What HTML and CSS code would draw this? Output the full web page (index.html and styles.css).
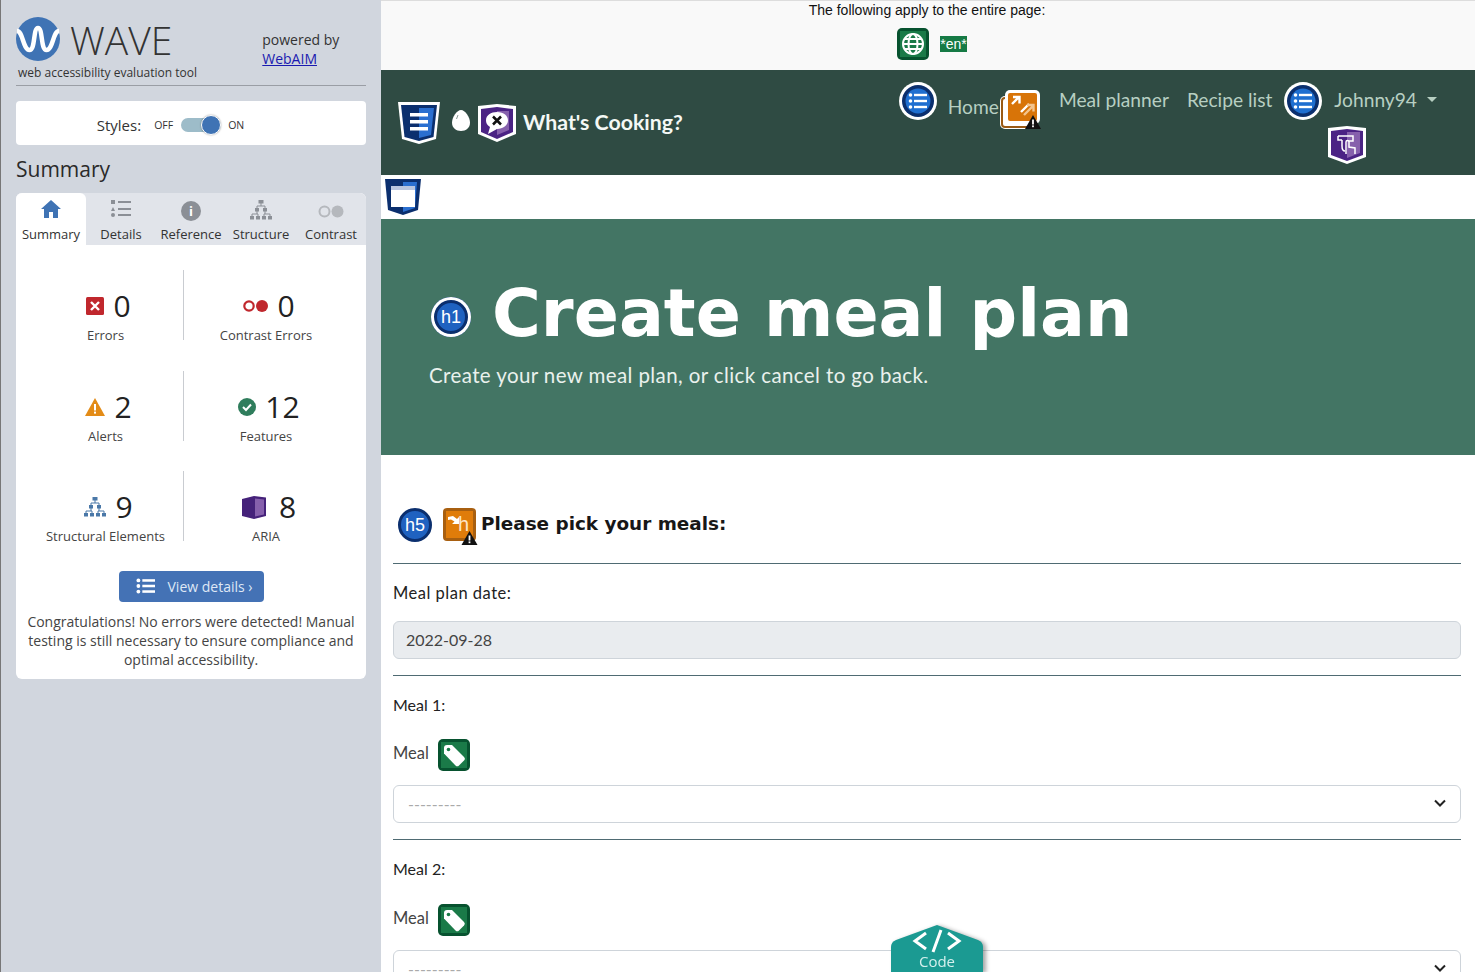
FILE: index.html
```html
<!DOCTYPE html>
<html lang="en">
<head>
  <meta charset="UTF-8" />
  <title>Create meal plan</title>
  <link rel="stylesheet" href="styles.css">
</head>
<body>
  <svg class="sprite" width="0" height="0">
    <defs>
      <symbol id="list-lines" viewBox="0 0 24 20">
        <circle cx="3" cy="3" r="2.4"/><circle cx="3" cy="10" r="2.4"/><circle cx="3" cy="17" r="2.4"/>
        <rect x="8" y="1.4" width="16" height="3.2"/><rect x="8" y="8.4" width="16" height="3.2"/><rect x="8" y="15.4" width="16" height="3.2"/>
      </symbol>
      <symbol id="round-list" viewBox="0 0 38 38">
        <circle cx="19" cy="19" r="19" fill="#fff"/>
        <circle cx="19" cy="19" r="16" fill="#0b2f6e"/>
        <circle cx="19" cy="19" r="12.5" fill="#1f6fd0"/>
        <g fill="#fff">
          <circle cx="11.5" cy="13" r="1.8"/><circle cx="11.5" cy="19" r="1.8"/><circle cx="11.5" cy="25" r="1.8"/>
          <rect x="15" y="11.8" width="13" height="2.4"/><rect x="15" y="17.8" width="13" height="2.4"/><rect x="15" y="23.8" width="13" height="2.4"/>
        </g>
      </symbol>
      <symbol id="tag" viewBox="0 0 32 32">
        <rect width="32" height="32" rx="5" fill="#07522f"/>
        <rect x="3" y="3" width="26" height="26" fill="#1a7a48"/>
        <path d="M6 9 a3 3 0 0 1 3-3 h5 l12 12 a2.5 2.5 0 0 1 0 3.5 l-5 5 a2.5 2.5 0 0 1-3.5 0 L6 14.5 Z" fill="#fff"/>
        <circle cx="10.5" cy="10.5" r="1.8" fill="#1a7a48"/>
      </symbol>
      <symbol id="warn" viewBox="0 0 16 14">
        <path d="M8 0 L16 14 H0 Z" fill="#111"/>
        <rect x="7.1" y="4.5" width="1.8" height="5" fill="#fff"/>
        <rect x="7.1" y="10.4" width="1.8" height="1.8" fill="#fff"/>
      </symbol>
    </defs>
  </svg>

  <aside class="sidebar">
    <header class="brand-row">
      <svg class="wave-logo" viewBox="0 0 44 44">
        <circle cx="22" cy="22" r="22" fill="#3f73b4"/>
        <path d="M1 14 C7 14 7 33 13.500 33 C19.500 33 17 11 22 11 C27 11 24.500 33 30.500 33 C37 33 37 14 43 14" fill="none" stroke="#fff" stroke-width="4.500"/>
      </svg>
      <span class="wave-name">WAVE</span>
      <span class="powered">powered by<br><a href="#">WebAIM</a></span>
    </header>
    <p class="tagline">web accessibility evaluation tool</p>

    <div class="styles-card">
      <span class="styles-label">Styles:</span>
      <span class="styles-state">OFF</span>
      <span class="switch"><span class="knob"></span></span>
      <span class="styles-state">ON</span>
    </div>

    <h2 class="side-title">Summary</h2>

    <div class="panel">
      <nav class="tabs">
        <a class="tab active">
          <svg viewBox="0 0 20 18" width="20" height="18"><path d="M10 0 L20 9 H17 V18 H12 V12 H8 V18 H3 V9 H0 Z" fill="#3f73b4"/></svg>
          Summary
        </a>
        <a class="tab">
          <svg viewBox="0 0 20 18" width="20" height="18" fill="#8b8f96"><rect x="0" y="0" width="4" height="4"/><path d="M2 7 L4 11 H0 Z"/><circle cx="2" cy="15" r="2"/><rect x="7" y="1" width="13" height="2"/><rect x="7" y="8" width="13" height="2"/><rect x="7" y="14" width="13" height="2"/></svg>
          Details
        </a>
        <a class="tab">
          <span class="info">i</span>
          Reference
        </a>
        <a class="tab">
          <svg viewBox="0 0 22 20" width="22" height="20"><g fill="#8b8f96"><rect x="8.5" y="0" width="5" height="3.5"/><rect x="5" y="8" width="4" height="3.5"/><rect x="13" y="8" width="4" height="3.5"/><rect x="0" y="16" width="4" height="3.5"/><rect x="6" y="16" width="4" height="3.5"/><rect x="12" y="16" width="4" height="3.5"/><rect x="18" y="16" width="4" height="3.5"/></g><path d="M11 3 V6 M7 8 V6 H15 V8 M2 16 V14 H8 V16 M7 11 V14 M14 16 V14 H20 V16 M15 11 V14" fill="none" stroke="#8b8f96"/></svg>
          Structure
        </a>
        <a class="tab">
          <svg class="contrast-icon" viewBox="0 0 26 13" width="26" height="13"><circle cx="6.5" cy="6.5" r="5" fill="none" stroke="#b5b8bd" stroke-width="2"/><circle cx="19.5" cy="6.5" r="6" fill="#b5b8bd"/></svg>
          Contrast
        </a>
      </nav>

      <div class="stats">
        <div class="stat">
          <div class="stat-top">
            <svg viewBox="0 0 18 18" width="18" height="18"><rect width="18" height="18" rx="1.5" fill="#c0272d"/><path d="M5 5 L13 13 M13 5 L5 13" stroke="#fff" stroke-width="2.4"/></svg>
            <span class="num">0</span>
          </div>
          <div class="stat-label">Errors</div>
        </div>
        <div class="stat">
          <div class="stat-top">
            <svg viewBox="0 0 25 12" width="25" height="12"><circle cx="6" cy="6" r="4.7" fill="none" stroke="#c0272d" stroke-width="2.2"/><circle cx="19" cy="6" r="6" fill="#c0272d"/></svg>
            <span class="num">0</span>
          </div>
          <div class="stat-label">Contrast Errors</div>
        </div>
        <div class="stat">
          <div class="stat-top">
            <svg viewBox="0 0 20 18" width="20" height="18"><path d="M10 0 L20 18 H0 Z" fill="#e38b17"/><rect x="9" y="6" width="2" height="6.5" fill="#fff"/><rect x="9" y="13.6" width="2" height="2" fill="#fff"/></svg>
            <span class="num">2</span>
          </div>
          <div class="stat-label">Alerts</div>
        </div>
        <div class="stat">
          <div class="stat-top">
            <svg viewBox="0 0 18 18" width="18" height="18"><circle cx="9" cy="9" r="9" fill="#2f7d5c"/><path d="M5 9 L8 12 L13 6.5" fill="none" stroke="#fff" stroke-width="2"/></svg>
            <span class="num">12</span>
          </div>
          <div class="stat-label">Features</div>
        </div>
        <div class="stat">
          <div class="stat-top">
            <svg viewBox="0 0 22 20" width="22" height="20"><g fill="#4a78a8"><rect x="8.5" y="0" width="5" height="3.5"/><rect x="5" y="8" width="4" height="3.5"/><rect x="13" y="8" width="4" height="3.5"/><rect x="0" y="16" width="4" height="3.5"/><rect x="6" y="16" width="4" height="3.5"/><rect x="12" y="16" width="4" height="3.5"/><rect x="18" y="16" width="4" height="3.5"/></g><path d="M11 3 V6 M7 8 V6 H15 V8 M2 16 V14 H8 V16 M7 11 V14 M14 16 V14 H20 V16 M15 11 V14" fill="none" stroke="#4a78a8"/></svg>
            <span class="num">9</span>
          </div>
          <div class="stat-label">Structural Elements</div>
        </div>
        <div class="stat">
          <div class="stat-top">
            <svg viewBox="0 0 24 23" width="24" height="23"><path d="M0 3 L12 0 V23 L0 20 Z" fill="#45227a"/><path d="M12 0 L24 1.5 V20 L12 23 Z" fill="#45227a"/><path d="M13 2.5 L22 3.5 V18.5 L13 20.5 Z" fill="#8660ac"/></svg>
            <span class="num num-aria">8</span>
          </div>
          <div class="stat-label">ARIA</div>
        </div>
      </div>

      <a class="details-btn">
        <svg width="19" height="16" class="btn-icon"><use href="#list-lines"/></svg>
        View details ›
      </a>
      <p class="congrats">Congratulations! No errors were detected! Manual testing is still necessary to ensure compliance and optimal accessibility.</p>
    </div>
  </aside>

  <div class="page">
    <div class="page-note">
      <div>The following apply to the entire page:</div>
      <div class="note-icons">
        <svg viewBox="0 0 32 32" width="32" height="32">
          <rect width="32" height="32" rx="5" fill="#07522f"/>
          <rect x="3" y="3" width="26" height="26" fill="#1a7a48"/>
          <g fill="none" stroke="#fff" stroke-width="2"><circle cx="16" cy="16" r="10"/><ellipse cx="16" cy="16" rx="4.5" ry="10"/><path d="M6 16 H26 M7.5 11 H24.5 M7.5 21 H24.5"/></g>
        </svg>
        <span class="lang-tag">*en*</span>
      </div>
    </div>

    <nav class="topnav">
      <a class="brand">
        <svg class="shield-lg" viewBox="0 0 42 42">
          <path d="M0 0 H42 L38 37 L21 42 L4 37 Z" fill="#fff"/>
          <path d="M3 3 H39 L35.500 35 L21 39 L6.500 35 Z" fill="#0b2f6e"/>
          <path d="M21 6 H36 L33 33 L21 36 Z" fill="#2a6fd0"/>
          <g fill="#fff"><rect x="12" y="11" width="18" height="3.500"/><rect x="12" y="18" width="18" height="3.500"/><rect x="12" y="25" width="18" height="3.500"/></g>
        </svg>
        <svg class="egg" viewBox="0 0 18 21"><path d="M9 0 C13 0 18 7 18 12.500 C18 18 14 21 9 21 C4 21 0 18 0 12.500 C0 7 5 0 9 0 Z" fill="#fff"/><path d="M6 5 L4.500 9" stroke="#8a9a95"/></svg>
        <svg class="shield-md" viewBox="0 0 38 38">
          <path d="M0 2 L19 0 L38 2 V30 L19 38 L0 30 Z" fill="#fff"/>
          <path d="M3 5 L19 3 L35 5 V28 L19 35 L3 28 Z" fill="#4b2384"/>
          <path d="M19 7 H31 V26 L19 31 Z" fill="#8660ac"/>
          <path d="M19 8 C26 8 30 12 30 16.500 C30 21 25 25 19 25 L10 30 L12 23 C9 21 8 19 8 16.500 C8 11 13 8 19 8 Z" fill="#fff"/>
          <path d="M15 12.500 L23 20.500 M23 12.500 L15 20.500" stroke="#111" stroke-width="2.500"/>
        </svg>
        <span class="brand-name">What's Cooking?</span>
      </a>
      <div class="menu">
        <svg class="nav-round" viewBox="0 0 38 38"><use href="#round-list"/></svg>
        <a class="nav-link home-link">Home</a>
        <span class="flag home-flag">
          <svg viewBox="0 0 40 39" width="40" height="39">
            <rect x="0" y="6" width="34" height="33" rx="5" fill="#fff"/>
            <rect x="2" y="8" width="30" height="29" rx="3" fill="none" stroke="#9a5a14" stroke-width="2"/>
            <rect x="5" y="0" width="35" height="34" rx="5" fill="#fff"/>
            <rect x="8" y="3" width="29" height="28" rx="2" fill="#d87408"/>
            <path d="M12 14 L19 7 M13 7 H19.500 V13.500 M21 22 L29 14" fill="none" stroke="#fff" stroke-width="2.400"/>
            <path d="M24 25 L33 16 M27 15 H33.500 V21.500" fill="none" stroke="#f3c48d" stroke-width="2.400"/>
          </svg>
          <svg class="warn-badge" width="16" height="14"><use href="#warn"/></svg>
        </span>
        <a class="nav-link">Meal planner</a>
        <a class="nav-link">Recipe list</a>
        <div class="user-block">
          <div class="user-row">
            <svg class="nav-round" viewBox="0 0 38 38"><use href="#round-list"/></svg>
            <a class="nav-link user-link">Johnny94</a>
            <span class="caret"></span>
          </div>
          <svg class="shield-touch" viewBox="0 0 38 38">
            <path d="M0 2 L19 0 L38 2 V31 L19 38 L0 31 Z" fill="#fff"/>
            <path d="M3 5 L19 3 L35 5 V29 L19 35 L3 29 Z" fill="#4b2384"/>
            <path d="M19 6 H32 V27 L19 32 Z" fill="#8660ac"/>
            <path d="M10 10 H25 V15 H21 M10 10 V14 H14 M14 14 V20 C14 24 15 25 17 25 M18 28 V16 a1.500 1.500 0 0 1 3 0 V21 L27 22 V28" fill="none" stroke="#fff" stroke-width="1.500"/>
          </svg>
        </div>
      </div>
    </nav>

    <div class="main-flag">
      <svg viewBox="0 0 36 36" width="36" height="36">
        <path d="M0 0 H36 L33 31 L18 36 L3 31 Z" fill="#0b2f6e"/>
        <path d="M18 3 H32 L30 29 L18 33 Z" fill="#2a6fd0"/>
        <rect x="6" y="7" width="24" height="21" fill="#fff"/>
        <rect x="6" y="7" width="24" height="4" fill="#b9c6e0"/>
      </svg>
    </div>

    <section class="hero">
      <div class="hero-title">
        <span class="round-h h1-mark">h1</span>
        <h1>Create meal plan</h1>
      </div>
      <p>Create your new meal plan, or click cancel to go back.</p>
    </section>

    <form class="plan-form">
      <div class="form-head">
        <span class="round-h h5-mark">h5</span>
        <span class="flag skip-flag">
          <svg viewBox="0 0 33 33" width="33" height="33">
            <rect width="33" height="33" rx="4" fill="#a85f10"/>
            <rect x="3" y="3" width="27" height="27" fill="#e07c0a"/>
            <path d="M5 9 L10 8 L14 11 L16 9 V16 H9 L11.500 13.500 L8 11.500 L5 12 Z" fill="#fff"/>
          </svg>
          <span class="skip-h">h</span>
          <svg class="warn-badge skip-warn" width="17" height="14"><use href="#warn"/></svg>
        </span>
        <h5>Please pick your meals:</h5>
      </div>
      <hr>
      <label class="field-title date-title">Meal plan date:</label>
      <div class="text-box">2022-09-28</div>
      <hr>
      <div class="field-title">Meal 1:</div>
      <div class="meal-label">Meal <svg width="32" height="32"><use href="#tag"/></svg></div>
      <div class="select-box">
        <span>---------</span>
        <svg viewBox="0 0 12 8" width="12" height="8"><path d="M1 1.500 L6 6.500 L11 1.500" fill="none" stroke="#222" stroke-width="2"/></svg>
      </div>
      <hr>
      <div class="field-title">Meal 2:</div>
      <div class="meal-label second-meal">Meal <svg width="32" height="32"><use href="#tag"/></svg></div>
      <div class="select-box">
        <span>---------</span>
        <svg viewBox="0 0 12 8" width="12" height="8"><path d="M1 1.500 L6 6.500 L11 1.500" fill="none" stroke="#222" stroke-width="2"/></svg>
      </div>
    </form>

    <a class="code-tab">
      <span class="code-shape">
        <svg class="code-mark" viewBox="0 0 50 24" width="50" height="24"><path d="M14 4 L3 12 L14 20 M36 4 L47 12 L36 20 M29 1 L21 23" fill="none" stroke="#fff" stroke-width="3"/></svg>
        <span class="code-word">Code</span>
      </span>
    </a>
  </div>
</body>
</html>
```

FILE: styles.css
```css
* {
  box-sizing: border-box;
}
html, body {
  margin: 0;
  height: 972px;
  overflow: hidden;
}
body {
  display: flex;
  font-family: "Open Sans", sans-serif;
  color: #222;
  background-color: #fff;
}
.sprite {
  position: absolute;
}
a {
  text-decoration: none;
}

/* sidebar */
.sidebar {
  width: 381px;
  flex: none;
  padding: 17px 15px 0 15px;
  background-color: #d1d6de;
  border-left: 1px solid #777;
}
.brand-row {
  display: flex;
  height: 44px;
}
.wave-logo {
  width: 44px;
  height: 44px;
}
.wave-name {
  margin-left: 10px;
  font-size: 39px;
  font-weight: 300;
  line-height: 46px;
  color: #333;
}
.powered {
  margin-left: 90px;
  padding-top: 13px;
  font-size: 14px;
  line-height: 19px;
  color: #333;
}
.powered a {
  color: #1a1ab0;
  text-decoration: underline;
}
.tagline {
  margin: 3px 0 0;
  padding: 0 0 3px 2px;
  font-size: 12px;
  line-height: 18px;
  border-bottom: 1px solid #9a9ea5;
  color: #333;
}
.styles-card {
  display: flex;
  align-items: center;
  justify-content: center;
  height: 44px;
  margin-top: 15px;
  padding: 4px 41px 0 0;
  background-color: #fff;
  border-radius: 4px;
}
.styles-label {
  margin-right: 13px;
  font-size: 15px;
  color: #333;
}
.styles-state {
  font-size: 10.5px;
  color: #333;
}
.switch {
  position: relative;
  width: 40px;
  height: 14px;
  margin: 0 7px 0 8px;
  border-radius: 7px;
  background-color: #9dbcc9;
}
.knob {
  position: absolute;
  right: 0;
  top: -3px;
  width: 20px;
  height: 20px;
  border-radius: 50%;
  background-color: #3f73b4;
  border: 1px solid #fff;
  box-shadow: 0 0 2px rgba(0,0,0,0.4);
}
.side-title {
  margin: 10px 0 10px;
  font-size: 21px;
  font-weight: 400;
  line-height: 28px;
  color: #2a2a2a;
}
.panel {
  height: 486px;
  background-color: #fff;
  border-radius: 6px;
}
.tabs {
  display: flex;
  height: 52px;
  background-color: #e1e4ea;
  border-radius: 6px 6px 0 0;
}
.tab {
  width: 70px;
  display: flex;
  flex-direction: column;
  align-items: center;
  justify-content: space-between;
  padding: 7px 0 2px;
  font-size: 13px;
  line-height: 17px;
  color: #333;
  white-space: nowrap;
}
.tab.active {
  background-color: #fff;
  border-radius: 6px 6px 0 0;
}
.contrast-icon {
  margin-top: 5px;
}
.info {
  width: 20px;
  height: 20px;
  margin-top: 1px;
  border-radius: 50%;
  background-color: #8b8f96;
  color: #fff;
  font-size: 13px;
  font-weight: 700;
  line-height: 20px;
  text-align: center;
}
.stats {
  display: grid;
  grid-template-columns: 168px 164px;
  grid-auto-rows: 70px;
  row-gap: 30.5px;
  padding-top: 25px;
}
.stat {
  display: flex;
  flex-direction: column;
  align-items: center;
}
.stat:nth-child(odd) {
  border-right: 1px solid #c9ccd1;
  padding-left: 12px;
}
.stat-top {
  display: flex;
  align-items: center;
  gap: 9px;
  height: 36px;
  margin-top: 18px;
  padding-left: 6px;
}
.num {
  font-size: 30px;
  line-height: 36px;
  color: #222;
}
.num-aria {
  margin-left: 4px;
}
.stat-label {
  margin-top: 2px;
  font-size: 13px;
  line-height: 18px;
  color: #444;
  white-space: nowrap;
}
.details-btn {
  display: flex;
  align-items: center;
  width: 145px;
  height: 31px;
  margin: 30px auto 0;
  padding: 0 0 1px 17px;
  background-color: #4472b5;
  border-radius: 4px;
  color: #dfe8f5;
  font-size: 14px;
  white-space: nowrap;
}
.btn-icon {
  margin-right: 13px;
  fill: #fff;
}
.congrats {
  margin: 10px 0 0;
  padding: 0 10px;
  font-size: 14px;
  line-height: 19px;
  text-align: center;
  color: #444;
}

/* page */
.page {
  flex: 1;
  min-width: 0;
  font-family: Lato, sans-serif;
}
.page-note {
  height: 70px;
  padding: 2px 2px 0 0;
  background-color: #f9f9f9;
  border-top: 1px solid #ddd;
  text-align: center;
  font-family: "Liberation Sans", sans-serif;
  font-size: 14px;
  line-height: 15px;
  color: #111;
}
.note-icons {
  display: flex;
  align-items: center;
  justify-content: center;
  gap: 11px;
  margin-top: 10px;
  padding-left: 10px;
}
.lang-tag {
  background-color: #167a45;
  color: #fff;
  line-height: 16px;
}
.topnav {
  display: flex;
  height: 105px;
  background-color: #2f4b43;
}
.brand {
  display: flex;
  align-items: center;
  padding-left: 17px;
  height: 105px;
}
.shield-lg {
  width: 42px;
  height: 42px;
}
.egg {
  width: 18px;
  height: 21px;
  margin: 0 8px 5px 12px;
}
.shield-md {
  width: 38px;
  height: 38px;
}
.brand-name {
  margin: 0 0 1px 7px;
  font-size: 21.3px;
  font-weight: 700;
  color: #f4f8f5;
  white-space: nowrap;
}
.menu {
  display: flex;
  align-items: flex-start;
  margin-left: auto;
  padding: 12px 38px 0 0;
}
.nav-round {
  width: 38px;
  height: 38px;
  flex: none;
}
.nav-link {
  font-size: 19.2px;
  line-height: 36px;
  color: #b7cfc2;
  white-space: nowrap;
}
.home-link {
  margin: 7px 0 0 11px;
}
.flag {
  position: relative;
  display: block;
  flex: none;
}
.home-flag {
  margin: 8px 19px 0 1px;
  height: 39px;
}
.warn-badge {
  position: absolute;
  right: -1px;
  bottom: 0;
}
.menu > .nav-link + .nav-link {
  margin-left: 18px;
}
.user-block {
  display: flex;
  flex-direction: column;
  margin-left: 12px;
}
.user-row {
  display: flex;
  align-items: flex-start;
}
.user-link {
  margin-left: 12px;
}
.caret {
  margin: 15px 0 0 10px;
  border: 5px solid transparent;
  border-top-color: #b7cfc2;
  border-bottom: 0;
}
.shield-touch {
  width: 38px;
  height: 38px;
  margin: 6px 0 0 44px;
}
.main-flag {
  height: 44px;
  padding: 4px 0 0 4px;
}
.main-flag svg {
  display: block;
}
.hero {
  height: 236px;
  padding: 54px 0 0 48px;
  background-color: #437564;
  color: #eaf1ed;
}
.hero-title {
  display: flex;
  align-items: center;
}
.hero h1 {
  margin: 0 0 0 21px;
  font-family: "DejaVu Sans", sans-serif;
  font-size: 66.6px;
  font-weight: 700;
  line-height: 80px;
  color: #fff;
}
.round-h {
  display: block;
  flex: none;
  border-radius: 50%;
  background-color: #1f62c0;
  color: #fff;
  font-family: "Liberation Sans", sans-serif;
  text-align: center;
}
.h1-mark {
  width: 40px;
  height: 40px;
  margin: 8px 0 0 2px;
  font-size: 18px;
  line-height: 40px;
  box-shadow: inset 0 0 0 3px #fff, inset 0 0 0 6px #0b2f6e;
}
.hero p {
  margin: 8px 0 0;
  font-size: 20.5px;
  line-height: 28px;
  letter-spacing: 0.4px;
}
.plan-form {
  padding: 53px 14px 0 12px;
}
.form-head {
  display: flex;
  align-items: flex-start;
  height: 38px;
}
.h5-mark {
  width: 34px;
  height: 34px;
  margin-left: 5px;
  font-size: 18px;
  line-height: 28px;
  border: 3px solid #0b2f6e;
}
.skip-flag {
  width: 33px;
  height: 36px;
  margin-left: 11px;
}
.skip-h {
  position: absolute;
  left: 15px;
  top: 5px;
  font-family: "Liberation Sans", sans-serif;
  font-size: 20px;
  color: #fde5c8;
}
.skip-warn {
  right: -2px;
  bottom: -1px;
}
.form-head h5 {
  margin: 2px 0 0 5px;
  font-family: "DejaVu Sans", sans-serif;
  font-size: 18.4px;
  font-weight: 700;
  line-height: 28px;
  color: #171717;
}
.plan-form hr {
  height: 1px;
  margin: 16px 0 0;
  border: 0;
  background-color: #4f6b73;
}
.form-head + hr {
  margin-top: 17px;
}
.field-title {
  display: block;
  margin-top: 17px;
  font-size: 16px;
  line-height: 24px;
  color: #222;
}
.date-title {
  font-size: 16.5px;
  letter-spacing: 0.5px;
}
.text-box, .select-box {
  display: flex;
  align-items: center;
  justify-content: space-between;
  height: 38px;
  padding: 0 14px 2px 12px;
  border: 1px solid #ced4da;
  border-radius: 6px;
  font-size: 16px;
}
.text-box {
  margin-top: 16px;
  background-color: #e9ecef;
  color: #444;
}
.select-box {
  margin-top: 14px;
  background-color: #fff;
  color: #aaa;
}
.select-box span {
  padding-left: 2px;
}
.meal-label {
  display: flex;
  align-items: flex-start;
  gap: 9px;
  height: 32px;
  margin-top: 22px;
  font-size: 16.5px;
  line-height: 28px;
  color: #444;
}
.second-meal {
  margin-top: 23px;
}
.code-tab {
  position: fixed;
  left: 891px;
  bottom: 0;
  filter: drop-shadow(3px 1px 2px rgba(0,0,0,0.35));
}
.code-shape {
  width: 92px;
  height: 47px;
  padding-top: 4px;
  display: flex;
  flex-direction: column;
  align-items: center;
  background-color: #1b9a92;
  clip-path: path('M0 47 V22 Q0 17 5 15 L46 0 L87 15 Q92 17 92 22 V47 Z');
  color: #fff;
  font-family: "Open Sans", sans-serif;
}
.code-word {
  margin-top: -1px;
  font-size: 15px;
  line-height: 18px;
  color: #d5f0ed;
}
```
